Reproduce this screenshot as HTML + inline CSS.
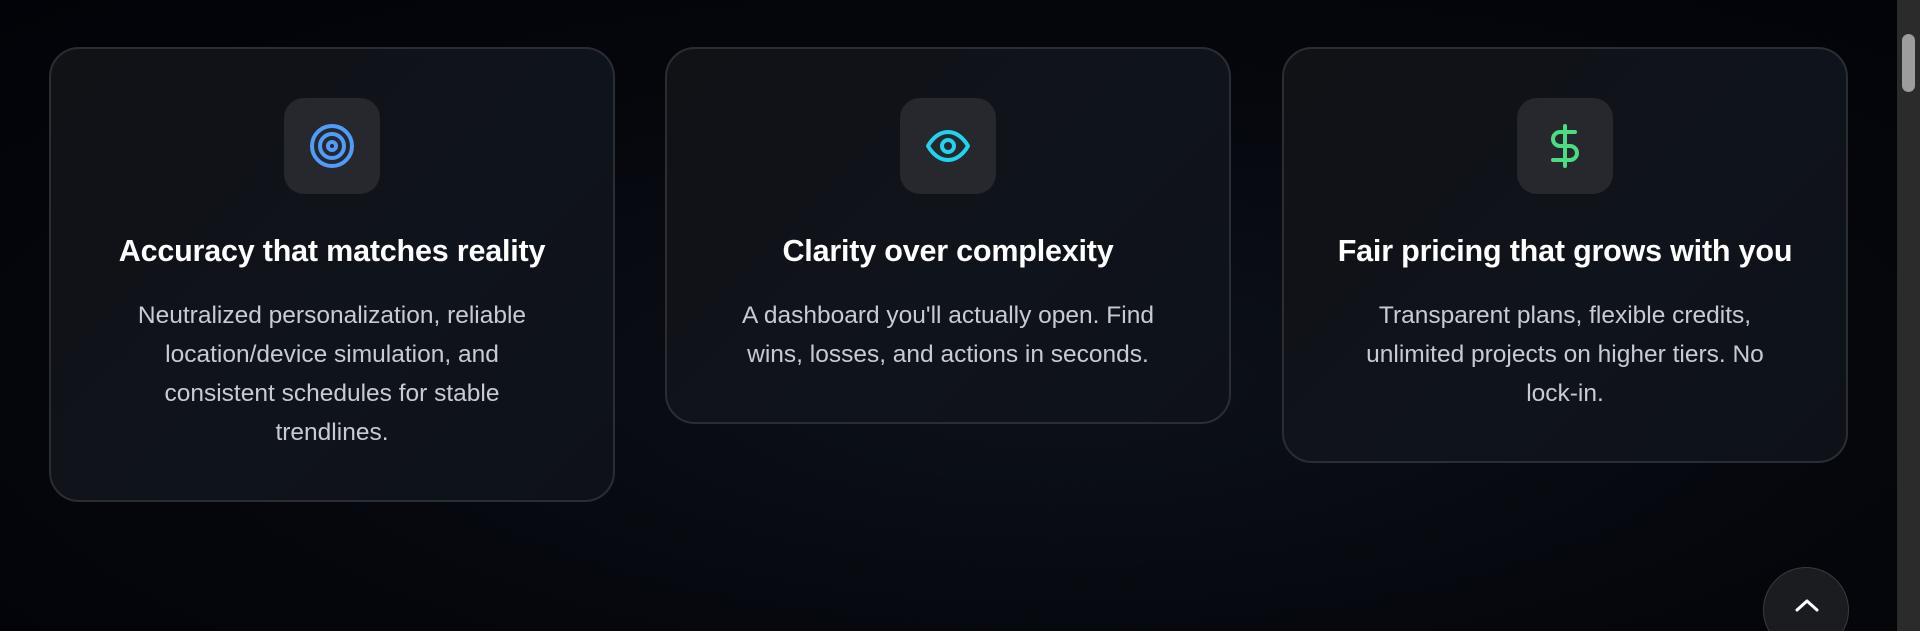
<!DOCTYPE html>
<html><head><style>
html,body{margin:0;padding:0;width:1920px;height:631px;overflow:hidden;}
body{background:radial-gradient(ellipse at 55% 60%,#0d1119 0%,#05070d 55%,#020308 100%);font-family:"Liberation Sans",sans-serif;position:relative;}
.card{position:absolute;top:47px;width:566px;border:2px solid #2a2d34;border-radius:30px;background:linear-gradient(135deg,#111216 0%,#0f131b 60%,#0e1118 100%);box-sizing:border-box;padding:49px 40px 48px;text-align:center;}
.ic{width:96px;height:96px;border-radius:20px;background:#26282e;margin:0 auto;display:flex;align-items:center;justify-content:center;}
h3{color:#fff;font-size:30.5px;font-weight:bold;line-height:36px;margin:39px 0 27px;letter-spacing:-0.2px;white-space:nowrap;}
p{color:#c8cbd2;font-size:24.5px;line-height:39px;margin:0 auto;max-width:445px;}
.sb{position:absolute;right:0;top:0;width:23px;height:631px;background:#2b2b2b;}
.th{position:absolute;right:5px;top:34px;width:13px;height:58px;border-radius:7px;background:#9d9d9d;}
.up{position:absolute;left:1763px;top:567px;width:86px;height:86px;border-radius:50%;background:#1b1c1f;border:1px solid #3a3b3f;box-sizing:border-box;}
</style></head><body>
<div class="card" style="left:49px;height:455px">
<div class="ic"><svg width="48" height="48" viewBox="0 0 24 24" fill="none" stroke="#4f9cf9" stroke-width="2"><circle cx="12" cy="12" r="10"/><circle cx="12" cy="12" r="6"/><circle cx="12" cy="12" r="2"/></svg></div>
<h3>Accuracy that matches reality</h3>
<p>Neutralized personalization, reliable location/device simulation, and consistent schedules for stable trendlines.</p>
</div>
<div class="card" style="left:665px;height:377px">
<div class="ic"><svg width="48" height="48" viewBox="0 0 24 24" fill="none" stroke="#22d3ee" stroke-width="2" stroke-linecap="round" stroke-linejoin="round"><path d="M2 12s3.5-7 10-7 10 7 10 7-3.5 7-10 7S2 12 2 12z"/><circle cx="12" cy="12" r="3"/></svg></div>
<h3>Clarity over complexity</h3>
<p>A dashboard you'll actually open. Find wins, losses, and actions in seconds.</p>
</div>
<div class="card" style="left:1282px;height:416px">
<div class="ic"><svg width="48" height="48" viewBox="0 0 24 24" fill="none" stroke="#4ade80" stroke-width="2" stroke-linecap="round" stroke-linejoin="round"><path d="M12 2v20"/><path d="M17 5H9.5a3.5 3.5 0 0 0 0 7h5a3.5 3.5 0 0 1 0 7H6"/></svg></div>
<h3>Fair pricing that grows with you</h3>
<p>Transparent plans, flexible credits, unlimited projects on higher tiers. No lock-in.</p>
</div>
<div class="up"><svg style="position:absolute;left:30px;top:29px" width="26" height="16" viewBox="0 0 26 16" fill="none" stroke="#fff" stroke-width="3" stroke-linecap="round" stroke-linejoin="round"><path d="M3 13L13 4l10 9"/></svg></div>
<div class="sb"><div class="th"></div></div>
</body></html>
